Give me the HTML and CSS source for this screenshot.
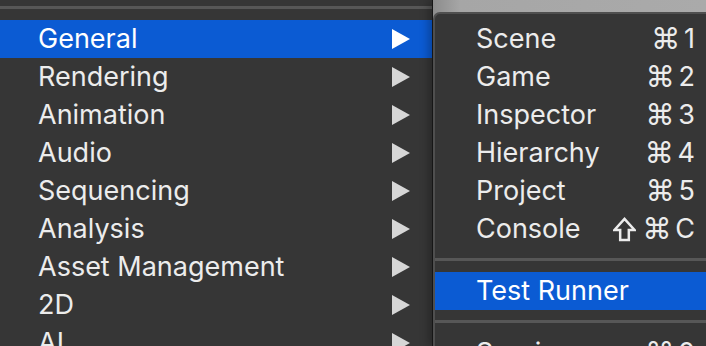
FILE: index.html
```html
<!DOCTYPE html>
<html lang="en">
	<head>
		<title>Window menu</title>
		<link rel="stylesheet" href="styles.css">
	</head>
	<body>
		<div class="menus">
			<div class="menu">
				<div class="sep"></div>
				<div class="item active"><span>General</span><svg class="arrow" viewBox="0 0 18 20"><polygon points="0,0 18,10 0,20"/></svg></div>
				<div class="item"><span>Rendering</span><svg class="arrow" viewBox="0 0 18 20"><polygon points="0,0 18,10 0,20"/></svg></div>
				<div class="item"><span>Animation</span><svg class="arrow" viewBox="0 0 18 20"><polygon points="0,0 18,10 0,20"/></svg></div>
				<div class="item"><span>Audio</span><svg class="arrow" viewBox="0 0 18 20"><polygon points="0,0 18,10 0,20"/></svg></div>
				<div class="item"><span>Sequencing</span><svg class="arrow" viewBox="0 0 18 20"><polygon points="0,0 18,10 0,20"/></svg></div>
				<div class="item"><span>Analysis</span><svg class="arrow" viewBox="0 0 18 20"><polygon points="0,0 18,10 0,20"/></svg></div>
				<div class="item"><span>Asset Management</span><svg class="arrow" viewBox="0 0 18 20"><polygon points="0,0 18,10 0,20"/></svg></div>
				<div class="item"><span>2D</span><svg class="arrow" viewBox="0 0 18 20"><polygon points="0,0 18,10 0,20"/></svg></div>
				<div class="item"><span>AI</span><svg class="arrow" viewBox="0 0 18 20"><polygon points="0,0 18,10 0,20"/></svg></div>
			</div>
			<div class="side">
				<div class="submenu">
					<div class="item"><span>Scene</span><span class="key"><i>⌘</i>1</span></div>
					<div class="item"><span>Game</span><span class="key"><i>⌘</i>2</span></div>
					<div class="item"><span>Inspector</span><span class="key"><i>⌘</i>3</span></div>
					<div class="item"><span>Hierarchy</span><span class="key"><i>⌘</i>4</span></div>
					<div class="item"><span>Project</span><span class="key"><i>⌘</i>5</span></div>
					<div class="item"><span>Console</span><span class="key"><svg class="shift" viewBox="0 0 24 25"><path d="M12 1.5 L22.5 13 H16.5 V23.5 H7.5 V13 H1.5 Z"/></svg><i>⌘</i>C</span></div>
					<div class="gap"><div class="line"></div></div>
					<div class="item active"><span>Test Runner</span></div>
					<div class="gap"><div class="line"></div></div>
					<div class="item"><span>Services</span><span class="key"><i>⌘</i>0</span></div>
				</div>
			</div>
		</div>
	</body>
</html>
```

FILE: styles.css
```css
body, html {
	margin:0;
	padding:0;
	height:100%;
	overflow:hidden;
	background-color:#363636;
	font-family:Inter,"Noto Sans",sans-serif;
	font-size:27px;
	color:#ececec;
}
.menus {
	display:flex;
	height:346px;
}
.menu {
	width:432px;
	flex-shrink:0;
	padding-top:6px;
}
.sep {
	height:3px;
	background-color:#575757;
	margin-bottom:11px;
}
.item {
	display:flex;
	align-items:center;
	justify-content:space-between;
	height:38px;
	line-height:38px;
}
.menu .item {
	padding:0 22px 0 38px;
}
.arrow {
	width:18px;
	height:20px;
	fill:#d6d6d6;
}
.active {
	background-color:#0b5bd3;
	color:#fff;
}
.active .arrow {
	fill:#fff;
}
.side {
	flex:1;
	border-left:1px solid #161616;
	background:linear-gradient(to right, #8c8c8c, #a6a6a6 10%, #aaaaaa);
	padding-top:12px;
	box-shadow:-4px 0 8px rgba(0,0,0,0.25);
}
.submenu {
	height:100%;
	background-color:#363636;
	border-left:2px solid #4f4f4f;
	border-top:2px solid #4f4f4f;
	border-top-left-radius:7px;
	padding-top:6px;
}
.submenu .item {
	padding:0 11px 0 41px;
}
.key {
	display:flex;
	align-items:center;
}
.key i {
	font-style:normal;
	font-family:"DejaVu Sans",sans-serif;
	font-size:29px;
	margin-right:4px;
}
.shift {
	width:23px;
	height:25px;
	margin-right:6px;
	fill:none;
	stroke:#ececec;
	stroke-width:2.6;
	stroke-linejoin:miter;
}
.gap {
	height:24px;
	padding-top:10px;
	box-sizing:border-box;
}
.line {
	height:3px;
	background-color:#575757;
}
```
